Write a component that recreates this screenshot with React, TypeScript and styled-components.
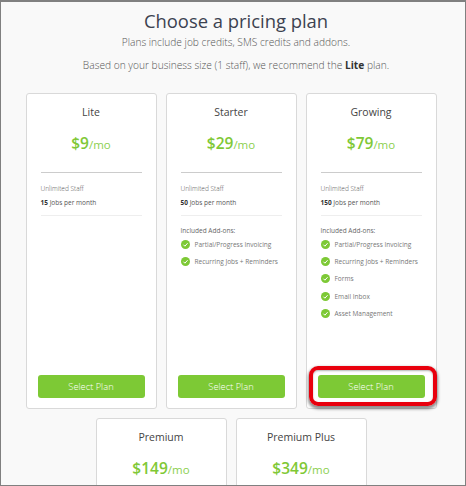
import React from 'react';
import styled, {createGlobalStyle} from 'styled-components';

const GlobalStyle = createGlobalStyle`
  html, body {
    margin: 0;
    padding: 0;
    background: #f9f9f9;
  }
  * {
    box-sizing: border-box;
  }
`

const Frame = styled.div`
  width: 466px;
  height: 486px;
  overflow: hidden;
  border: 1px solid #808080;
  border-top-width: 2px;
  background: #f9f9f9;
  font-family: "Open Sans", "Liberation Sans", sans-serif;
  color: #444;
`
const Header = styled.div`
  text-align: center;
  padding: 5px 0 0 6px;
`
const Title = styled.h1`
  margin: 0;
  font-size: 18.4px;
  line-height: 27px;
  font-weight: 400;
  color: #3c4250;
`
const Sub = styled.p<{$gap: number}>`
  margin: ${p => p.$gap}px 0 0;
  font-size: 10.2px;
  line-height: 15px;
  font-weight: 300;
  color: #555;
  & > b {
    font-weight: 700;
    color: #333;
  }
`
const Row = styled.div<{$top: number}>`
  display: flex;
  justify-content: center;
  gap: 9px;
  margin-top: ${p => p.$top}px;
  padding-right: 4px;
`
const Card = styled.div<{$short?: boolean}>`
  position: relative;
  flex: none;
  width: 131px;
  height: ${p => (p.$short ? 120 : 316)}px;
  background: #fff;
  border: 1px solid #d9d9d9;
  border-radius: 3px;
  padding: 0 14px;
  display: flex;
  flex-direction: column;
`
const PlanName = styled.div`
  margin-top: 10px;
  text-align: center;
  font-size: 10.5px;
  line-height: 16px;
  color: #444;
`
const Price = styled.div`
  margin-top: 11px;
  text-align: center;
  line-height: 24px;
  color: #7fc836;
  & > b {
    font-size: 15.5px;
    font-weight: 600;
  }
  & > span {
    font-size: 11.5px;
    font-weight: 400;
    color: #8ccf4f;
  }
`
const Rule = styled.hr<{$light?: boolean; $top?: number}>`
  border: 0;
  height: 1px;
  margin: ${p => p.$top || 0}px 0 0;
  background: ${p => (p.$light ? '#eee' : '#ccc')};
`
const Limits = styled.div`
  padding: 9px 0 6px;
  font-size: 6.5px;
  line-height: 13.5px;
  font-weight: 300;
  color: #555;
  & > div + div {
    font-weight: 400;
    color: #555;
  }
  & b {
    font-weight: 700;
    color: #333;
  }
`
const AddonTitle = styled.div`
  margin-top: 10px;
  font-size: 6.5px;
  line-height: 10px;
  color: #666;
`
const AddonList = styled.ul`
  list-style: none;
  margin: 0;
  padding: 0;
`
const Addon = styled.li`
  display: flex;
  align-items: center;
  gap: 5px;
  height: 17.2px;
  font-size: 6.5px;
  color: #777;
  white-space: nowrap;
  & > svg {
    flex: none;
  }
`
const SelectButton = styled.button`
  margin: auto -3px 10px;
  height: 23px;
  border: 0;
  border-radius: 3px;
  padding: 0;
  background: #7dc935;
  color: #fff;
  font-family: inherit;
  font-size: 9.3px;
  font-weight: 300;
`
const Highlight = styled.div`
  position: absolute;
  left: 2px;
  right: -1px;
  bottom: 2px;
  height: 40px;
  border: 4px solid #e8000d;
  border-radius: 9px;
  box-shadow: 0 2px 3px 1px rgba(0, 0, 0, 0.45), inset 0 1px 2px rgba(0, 0, 0, 0.3);
  pointer-events: none;
`

function Check() {
    return (
        <svg width="9" height="9" viewBox="0 0 18 18">
            <circle cx="9" cy="9" r="9" fill="#7dc935"/>
            <path d="M4.8 9.4l3 3 5.4-6" fill="none" stroke="#fff" strokeWidth="2"/>
        </svg>
    )
}

type Plan = {
    name: string
    price: number
    jobs?: number
    addons?: string[]
    picked?: boolean
}

const allAddons = ['Partial/Progress Invoicing', 'Recurring Jobs + Reminders', 'Forms', 'Email Inbox', 'Asset Management']

const topPlans: Plan[] = [
    {name: 'Lite', price: 9, jobs: 15},
    {name: 'Starter', price: 29, jobs: 50, addons: allAddons.slice(0, 2)},
    {name: 'Growing', price: 79, jobs: 150, addons: allAddons, picked: true},
]
const bottomPlans: Plan[] = [
    {name: 'Premium', price: 149},
    {name: 'Premium Plus', price: 349},
]

function PlanCard({plan, short}: {plan: Plan, short?: boolean}) {
    return (
        <Card $short={short}>
            <PlanName>{plan.name}</PlanName>
            <Price><b>${plan.price}</b><span>/mo</span></Price>
            {!short && <>
                <Rule $top={15}/>
                <Limits>
                    <div>Unlimited Staff</div>
                    <div><b>{plan.jobs}</b> Jobs per month</div>
                </Limits>
                <Rule $light/>
                {plan.addons && <>
                    <AddonTitle>Included Add-ons:</AddonTitle>
                    <AddonList>
                        {plan.addons.map(a => <Addon key={a}><Check/>{a}</Addon>)}
                    </AddonList>
                </>}
                <SelectButton>Select Plan</SelectButton>
            </>}
            {plan.picked && <Highlight/>}
        </Card>
    )
}

function App() {
    return (
        <Frame>
            <GlobalStyle/>
            <Header>
                <Title>Choose a pricing plan</Title>
                <Sub $gap={1}>Plans include job credits, SMS credits and addons.</Sub>
                <Sub $gap={8}>Based on your business size (1 staff), we recommend the <b>Lite</b> plan.</Sub>
            </Header>
            <Row $top={20}>
                {topPlans.map(p => <PlanCard key={p.name} plan={p}/>)}
            </Row>
            <Row $top={9}>
                {bottomPlans.map(p => <PlanCard key={p.name} plan={p} short/>)}
            </Row>
        </Frame>
    );
}

export default App;
